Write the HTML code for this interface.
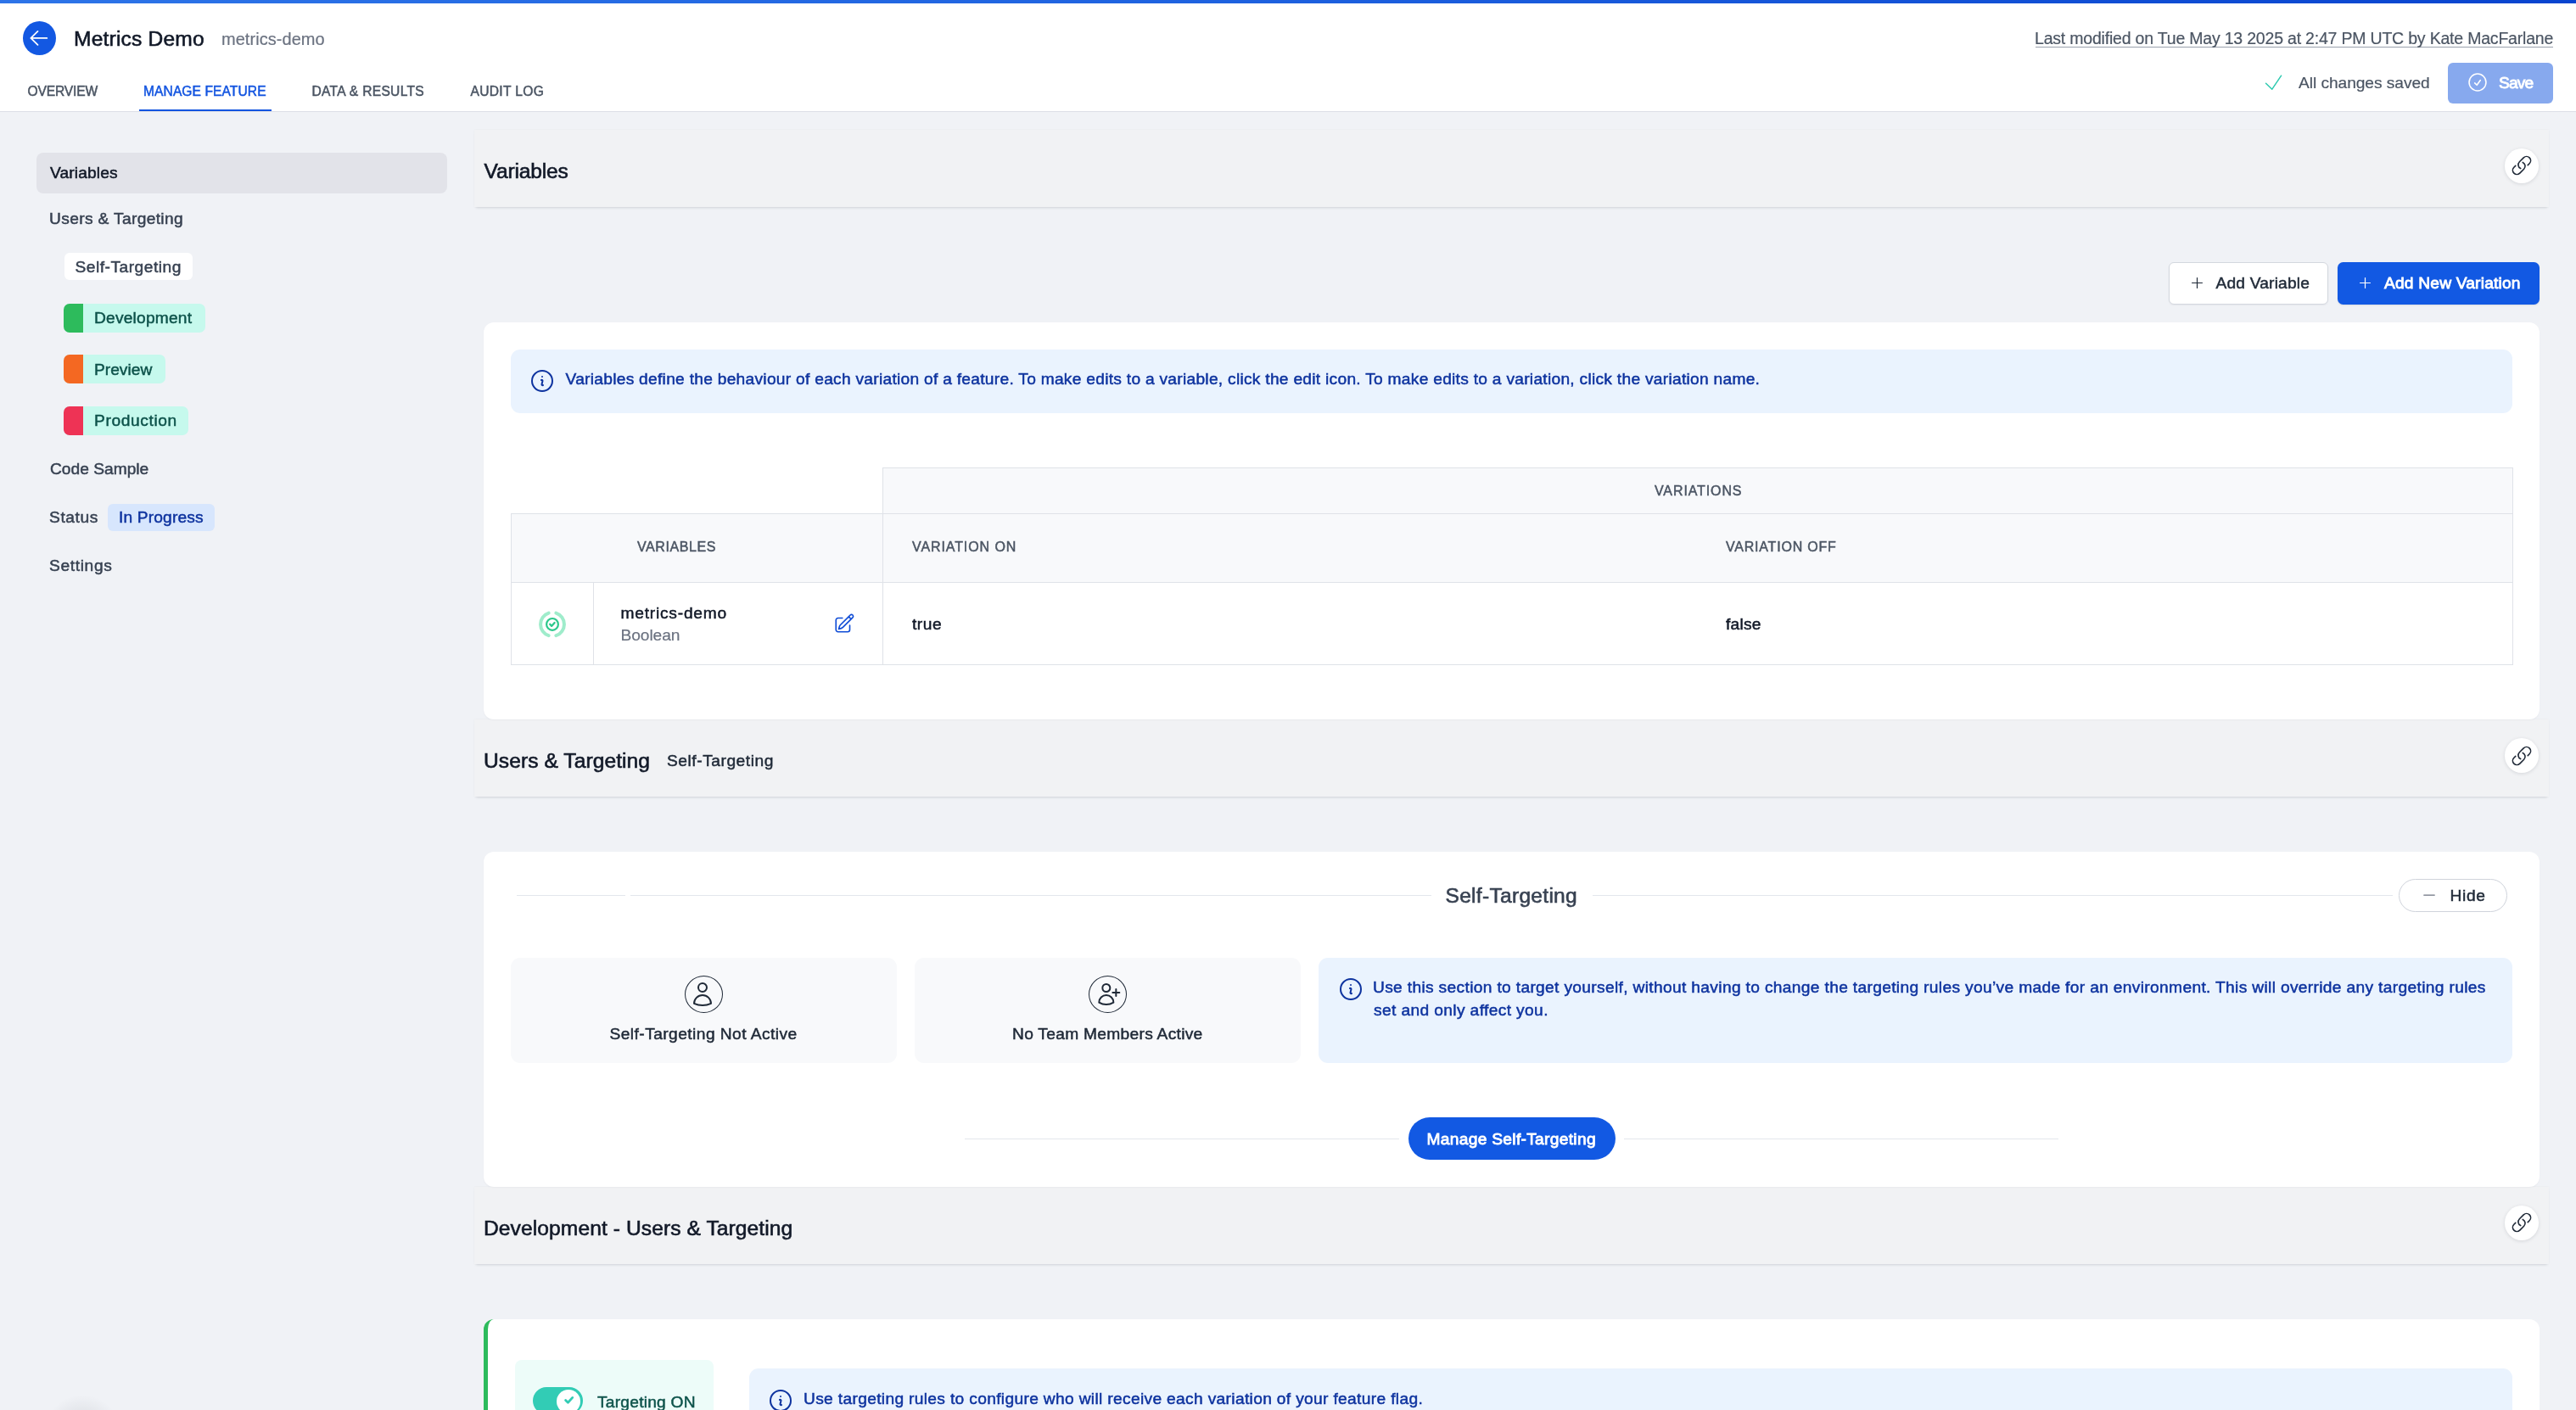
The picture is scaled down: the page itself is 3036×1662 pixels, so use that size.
<!DOCTYPE html>
<html lang="en"><head><meta charset="utf-8"><title>Metrics Demo - Manage Feature</title>
<style>
html,body{margin:0;padding:0;}
body{width:3036px;height:1662px;overflow:hidden;position:relative;background:#f0f2f6;font-family:'Liberation Sans',sans-serif;}
.a{position:absolute;box-sizing:border-box;}
.t{position:absolute;white-space:pre;font-family:'Liberation Sans',sans-serif;}
svg{position:absolute;overflow:visible;}
.panel{left:559px;width:2445px;height:91px;background:#f1f2f4;box-shadow:0 3px 3px -2px rgba(15,23,42,.13),0 0 2px rgba(15,23,42,.05);}
.card{left:570px;width:2423px;background:#fff;border-radius:12px;box-shadow:0 1px 2px rgba(15,23,42,.04);}
.info{background:#eaf3fe;border-radius:11px;}
.gbox{background:#f8f9fb;border-radius:11px;}
.linkc{width:40.8px;height:41px;border-radius:50%;background:#fff;box-shadow:0 1px 4px rgba(15,23,42,.12);left:2951.6px;}
.hl{height:1.33px;background:#e3e6ec;}
.pill{border-radius:7px;background:#c6f9ed;overflow:hidden;}
.pill i{position:absolute;left:0;top:0;bottom:0;width:23px;}
.tl{position:absolute;left:0;top:0;width:3036px;height:1662px;will-change:transform;}
@media (max-width:1600px){html{zoom:.5;}}

</style></head>
<body>
<!-- header -->
<div class="a" style="left:0;top:0;width:3036px;height:131.5px;background:#fff;border-bottom:1.33px solid #dcdfe6;"></div>
<div class="a" style="left:0;top:0;width:3036px;height:4px;background:linear-gradient(90deg,#2d74e8 0%,#1f63e0 45%,#0944cf 100%);"></div>
<div class="a" style="left:27px;top:25px;width:39px;height:40px;border-radius:50%;background:#1358e2;"></div>
<svg style="left:27px;top:25px" width="40" height="40" viewBox="0 0 40 40" fill="none" stroke="#fff" stroke-width="1.8" stroke-linecap="round" stroke-linejoin="round"><path d="M28.3 19.9H9.4M17.5 11.9l-8.1 8 8.1 8"/></svg>
<div class="a" style="left:164px;top:128.8px;width:156px;height:2.5px;background:#1355e0;"></div>
<div class="a" style="left:2399px;top:55px;width:610px;height:1.1px;background:#9aa1ad;"></div>
<!-- saved check -->
<svg style="left:2660px;top:80px" width="40" height="36" viewBox="0 0 40 36" fill="none" stroke="#2fcab0" stroke-width="1.5" stroke-linecap="round" stroke-linejoin="round"><path d="M10.5 18.2l7.3 7 10.8-16"/></svg>
<!-- save button -->
<div class="a" style="left:2885px;top:74px;width:124px;height:48px;border-radius:6px;background:#87a9ee;"></div>
<svg style="left:2904px;top:81.1px" width="32" height="32" viewBox="0 0 24 24" fill="none" stroke="#fff" stroke-width="1.4" stroke-linecap="round" stroke-linejoin="round"><path d="M9 12.75L11.25 15 15 9.75M21 12a9 9 0 11-18 0 9 9 0 0118 0z" transform="translate(12 12) scale(.83) translate(-12 -12)"/></svg>

<!-- sidebar -->
<div class="a" style="left:43px;top:180px;width:484px;height:47.5px;border-radius:8px;background:#e2e3e9;"></div>
<div class="a" style="left:76px;top:298px;width:151px;height:32px;border-radius:6px;background:#fff;"></div>
<div class="a pill" style="left:75px;top:358px;width:167px;height:33.5px;"><i style="background:#2dbb5c"></i></div>
<div class="a pill" style="left:75px;top:418px;width:120px;height:33.5px;"><i style="background:#f46822"></i></div>
<div class="a pill" style="left:75px;top:479px;width:147px;height:34px;"><i style="background:#ee3355"></i></div>
<div class="a" style="left:127px;top:594px;width:126px;height:31.5px;border-radius:6px;background:#d7e6fd;"></div>

<!-- section panels -->
<div class="a panel" style="top:152.5px;"></div>
<div class="a panel" style="top:848px;"></div>
<div class="a panel" style="top:1398.5px;"></div>

<!-- link circles -->
<div class="a linkc" style="top:174.7px;"></div>
<div class="a linkc" style="top:870.3px;"></div>
<div class="a linkc" style="top:1420.8px;"></div>
<svg style="left:2958.8px;top:181.9px" width="26" height="26" viewBox="0 0 24 24" fill="none" stroke="#1f2937" stroke-width="1.5" stroke-linecap="round" stroke-linejoin="round"><path d="M13.19 8.688a4.5 4.5 0 011.242 7.244l-4.5 4.5a4.5 4.5 0 01-6.364-6.364l1.757-1.757m13.35-.622l1.757-1.757a4.5 4.5 0 00-6.364-6.364l-4.5 4.5a4.5 4.5 0 001.242 7.244"/></svg>
<svg style="left:2958.8px;top:877.5px" width="26" height="26" viewBox="0 0 24 24" fill="none" stroke="#1f2937" stroke-width="1.5" stroke-linecap="round" stroke-linejoin="round"><path d="M13.19 8.688a4.5 4.5 0 011.242 7.244l-4.5 4.5a4.5 4.5 0 01-6.364-6.364l1.757-1.757m13.35-.622l1.757-1.757a4.5 4.5 0 00-6.364-6.364l-4.5 4.5a4.5 4.5 0 001.242 7.244"/></svg>
<svg style="left:2958.8px;top:1428px" width="26" height="26" viewBox="0 0 24 24" fill="none" stroke="#1f2937" stroke-width="1.5" stroke-linecap="round" stroke-linejoin="round"><path d="M13.19 8.688a4.5 4.5 0 011.242 7.244l-4.5 4.5a4.5 4.5 0 01-6.364-6.364l1.757-1.757m13.35-.622l1.757-1.757a4.5 4.5 0 00-6.364-6.364l-4.5 4.5a4.5 4.5 0 001.242 7.244"/></svg>

<!-- buttons -->
<div class="a" style="left:2556.2px;top:309.3px;width:187.5px;height:49.4px;border-radius:6px;background:#fff;border:1.33px solid #d3d7de;box-shadow:0 1px 2px rgba(15,23,42,.05);"></div>
<svg style="left:2580.2px;top:324px" width="19" height="19" viewBox="0 0 24 24" fill="none" stroke="#1f2937" stroke-width="1.5" stroke-linecap="round"><path d="M12 4.5v15m7.5-7.5h-15"/></svg>
<div class="a" style="left:2755px;top:309px;width:238px;height:50px;border-radius:6.5px;background:#1259e3;box-shadow:0 1px 2px rgba(15,23,42,.10);"></div>
<svg style="left:2777.9px;top:324px" width="19" height="19" viewBox="0 0 24 24" fill="none" stroke="#fff" stroke-width="1.5" stroke-linecap="round"><path d="M12 4.5v15m7.5-7.5h-15"/></svg>

<!-- card 1 -->
<div class="a card" style="top:380px;height:467.5px;"></div>
<div class="a info" style="left:602px;top:412px;width:2359px;height:75px;"></div>
<svg style="left:623px;top:432.7px" width="32" height="32" viewBox="0 0 24 24" fill="none" stroke="#0e339f" stroke-width="1.5" stroke-linecap="round" stroke-linejoin="round"><path d="M11.25 11.25l.041-.02a.75.75 0 011.063.852l-.708 2.836a.75.75 0 001.063.853l.041-.021M21 12a9 9 0 11-18 0 9 9 0 0118 0zm-9-3.75h.008v.008H12V8.25z"/></svg>
<!-- table -->
<div class="a" style="left:1040px;top:551px;width:1921.5px;height:55px;background:#f8f9fb;border:1.33px solid #dfe2e8;border-bottom:none;"></div>
<div class="a" style="left:602px;top:605px;width:2359.5px;height:82px;background:#f8f9fb;border:1.33px solid #dfe2e8;"></div>
<div class="a" style="left:602px;top:685.7px;width:2359.5px;height:98px;background:#fff;border:1.33px solid #dfe2e8;"></div>
<div class="a" style="left:1040px;top:605px;width:1.33px;height:178px;background:#dfe2e8;"></div>
<div class="a" style="left:699px;top:686px;width:1.33px;height:97px;background:#dfe2e8;"></div>
<!-- status icon -->
<svg style="left:631px;top:716px" width="40" height="40" viewBox="0 0 40 40" fill="none" stroke-linecap="round" stroke-linejoin="round">
<path d="M15.67 6.6A14 14 0 0 0 15.67 33.2M24.33 6.6A14 14 0 0 1 24.33 33.2" stroke="#9feccb" stroke-width="4"/>
<circle cx="20" cy="19.9" r="6.9" stroke="#2dc88c" stroke-width="2.2"/>
<path d="M17.2 19.8l1.9 2.1 3.5-3.9" stroke="#2dc88c" stroke-width="2.3"/>
</svg>
<!-- edit icon -->
<svg style="left:982.2px;top:721.7px" width="26" height="26" viewBox="0 0 24 24" fill="none" stroke="#0f4cd6" stroke-width="1.5" stroke-linecap="round" stroke-linejoin="round"><path d="M16.862 4.487l1.687-1.688a1.875 1.875 0 112.652 2.652L10.582 16.07a4.5 4.5 0 01-1.897 1.13L6 18l.8-2.685a4.5 4.5 0 011.13-1.897l8.932-8.931zm0 0L19.5 7.125M18 14v4.75A2.25 2.25 0 0115.75 21H5.25A2.25 2.25 0 013 18.75V8.25A2.25 2.25 0 015.25 6H10"/></svg>

<!-- card 2 -->
<div class="a card" style="top:1004px;height:394.5px;"></div>
<div class="a hl" style="left:609px;top:1054.5px;width:128px;"></div>
<div class="a hl" style="left:743px;top:1054.5px;width:943.5px;"></div>
<div class="a hl" style="left:1876.5px;top:1054.5px;width:943.5px;"></div>
<div class="a" style="left:2827px;top:1036px;width:128px;height:39px;border-radius:20px;background:#fff;border:1.33px solid #cfd3db;"></div>
<svg style="left:2853.25px;top:1045px" width="20" height="20" viewBox="0 0 24 24" fill="none" stroke="#6b7280" stroke-width="1.5" stroke-linecap="round"><path d="M19.5 12h-15"/></svg>
<div class="a gbox" style="left:602px;top:1129px;width:455px;height:124px;"></div>
<div class="a gbox" style="left:1078px;top:1129px;width:455px;height:124px;"></div>
<div class="a info" style="left:1554px;top:1129px;width:1407px;height:124px;"></div>
<!-- person icons -->
<div class="a" style="left:807px;top:1150px;width:45px;height:44px;border-radius:50%;border:1.4px solid #1f2937;"></div>
<svg style="left:812.4px;top:1155.5px" width="32" height="32" viewBox="0 0 24 24" fill="none" stroke="#1f2937" stroke-width="1.5" stroke-linecap="round" stroke-linejoin="round"><path d="M15.75 6a3.75 3.75 0 11-7.5 0 3.75 3.75 0 017.5 0zM4.501 20.118a7.5 7.5 0 0114.998 0A17.933 17.933 0 0112 21.75c-2.676 0-5.216-.584-7.499-1.632z"/></svg>
<div class="a" style="left:1283px;top:1150px;width:45px;height:44px;border-radius:50%;border:1.4px solid #1f2937;"></div>
<svg style="left:1289.5px;top:1156px" width="32" height="32" viewBox="0 0 24 24" fill="none" stroke="#1f2937" stroke-width="1.5" stroke-linecap="round" stroke-linejoin="round"><path d="M19 7.5v3m0 0v3m0-3h3m-3 0h-3m-2.25-4.125a3.375 3.375 0 11-6.75 0 3.375 3.375 0 016.75 0zM4 19.235v-.11a6.375 6.375 0 0112.75 0v.109A12.318 12.318 0 0110.374 21c-2.331 0-4.512-.645-6.374-1.766z"/></svg>
<svg style="left:1576px;top:1149.5px" width="32" height="32" viewBox="0 0 24 24" fill="none" stroke="#0e339f" stroke-width="1.5" stroke-linecap="round" stroke-linejoin="round"><path d="M11.25 11.25l.041-.02a.75.75 0 011.063.852l-.708 2.836a.75.75 0 001.063.853l.041-.021M21 12a9 9 0 11-18 0 9 9 0 0118 0zm-9-3.75h.008v.008H12V8.25z"/></svg>
<div class="a hl" style="left:1137px;top:1342px;width:512px;"></div>
<div class="a hl" style="left:1914px;top:1342px;width:512px;"></div>
<div class="a" style="left:1660px;top:1317px;width:243.5px;height:49.5px;border-radius:25px;background:#1259e3;"></div>

<!-- card 3 -->
<div class="a" style="left:570px;top:1555px;width:2423px;height:200px;background:#fff;border-radius:12px 12px 0 0;border-left:5.3px solid #2dbb5c;"></div>
<div class="a" style="left:607px;top:1603px;width:234px;height:80px;border-radius:8px;background:#edfcf9;"></div>
<div class="a" style="left:628px;top:1635px;width:59px;height:32px;border-radius:16px;background:#32ccb5;"></div>
<div class="a" style="left:656px;top:1637.5px;width:28px;height:28px;border-radius:50%;background:#fff;"></div>
<svg style="left:660px;top:1640px" width="21" height="21" viewBox="0 0 21 21" fill="none" stroke="#32ccb5" stroke-width="2.8" stroke-linecap="round" stroke-linejoin="round"><path d="M6.6 10.4l2.8 2.8 5.3-5.8"/></svg>
<div class="a info" style="left:883px;top:1613px;width:2078px;height:100px;"></div>
<svg style="left:904px;top:1635px" width="32" height="32" viewBox="0 0 24 24" fill="none" stroke="#0e339f" stroke-width="1.5" stroke-linecap="round" stroke-linejoin="round"><path d="M11.25 11.25l.041-.02a.75.75 0 011.063.852l-.708 2.836a.75.75 0 001.063.853l.041-.021M21 12a9 9 0 11-18 0 9 9 0 0118 0zm-9-3.75h.008v.008H12V8.25z"/></svg>
<!-- faint widget shadow bottom-left -->
<div class="a" style="left:52px;top:1644px;width:90px;height:90px;border-radius:50%;background:radial-gradient(closest-side,rgba(15,23,42,.11) 25%,rgba(15,23,42,.05) 60%,rgba(15,23,42,0) 100%);"></div>

<div class="tl">
<div class="t" style="left:87.00px;top:29.67px;font-size:24.6px;line-height:32px;letter-spacing:0.182px;color:#111827;font-weight:400;-webkit-text-stroke:0.6px currentColor;">Metrics Demo</div>
<div class="t" style="left:261.00px;top:32.77px;font-size:20px;line-height:26px;letter-spacing:0.045px;color:#6b7280;font-weight:400;-webkit-text-stroke:0.2px currentColor;">metrics-demo</div>
<div class="t" style="left:32.50px;top:97.79px;font-size:15.6px;line-height:20px;letter-spacing:-0.143px;color:#4b5563;font-weight:400;-webkit-text-stroke:0.5px currentColor;">OVERVIEW</div>
<div class="t" style="left:169.00px;top:97.79px;font-size:15.6px;line-height:20px;letter-spacing:0.077px;color:#1355e0;font-weight:400;-webkit-text-stroke:0.5px currentColor;">MANAGE FEATURE</div>
<div class="t" style="left:367.50px;top:97.79px;font-size:15.6px;line-height:20px;letter-spacing:0.308px;color:#4b5563;font-weight:400;-webkit-text-stroke:0.5px currentColor;">DATA &amp; RESULTS</div>
<div class="t" style="left:554.50px;top:97.79px;font-size:15.6px;line-height:20px;letter-spacing:0.312px;color:#4b5563;font-weight:400;-webkit-text-stroke:0.5px currentColor;">AUDIT LOG</div>
<div class="t" style="left:2398.00px;top:32.94px;font-size:19.5px;line-height:25px;letter-spacing:-0.200px;color:#4b5563;font-weight:400;-webkit-text-stroke:0.2px currentColor;">Last modified on Tue May 13 2025 at 2:47 PM UTC by Kate MacFarlane</div>
<div class="t" style="left:2709.00px;top:84.79px;font-size:19.2px;line-height:25px;letter-spacing:-0.062px;color:#4b5563;font-weight:400;-webkit-text-stroke:0.2px currentColor;">All changes saved</div>
<div class="t" style="left:2945.00px;top:84.79px;font-size:19.2px;line-height:25px;letter-spacing:-0.833px;color:#ffffff;font-weight:400;-webkit-text-stroke:0.85px currentColor;">Save</div>
<div class="t" style="left:59.00px;top:191.04px;font-size:19.2px;line-height:25px;letter-spacing:0.125px;color:#111827;font-weight:400;-webkit-text-stroke:0.5px currentColor;">Variables</div>
<div class="t" style="left:58.00px;top:245.04px;font-size:19.2px;line-height:25px;letter-spacing:0.344px;color:#374151;font-weight:400;-webkit-text-stroke:0.5px currentColor;">Users &amp; Targeting</div>
<div class="t" style="left:88.50px;top:302.04px;font-size:19.2px;line-height:25px;letter-spacing:0.500px;color:#374151;font-weight:400;-webkit-text-stroke:0.5px currentColor;">Self-Targeting</div>
<div class="t" style="left:111.00px;top:362.04px;font-size:19.2px;line-height:25px;letter-spacing:0.200px;color:#0e534b;font-weight:400;-webkit-text-stroke:0.5px currentColor;">Development</div>
<div class="t" style="left:111.00px;top:422.54px;font-size:19.2px;line-height:25px;letter-spacing:0.000px;color:#0e534b;font-weight:400;-webkit-text-stroke:0.5px currentColor;">Preview</div>
<div class="t" style="left:111.00px;top:483.04px;font-size:19.2px;line-height:25px;letter-spacing:0.611px;color:#0e534b;font-weight:400;-webkit-text-stroke:0.5px currentColor;">Production</div>
<div class="t" style="left:59.00px;top:540.04px;font-size:19.2px;line-height:25px;letter-spacing:0.000px;color:#374151;font-weight:400;-webkit-text-stroke:0.5px currentColor;">Code Sample</div>
<div class="t" style="left:58.00px;top:597.04px;font-size:19.2px;line-height:25px;letter-spacing:0.600px;color:#374151;font-weight:400;-webkit-text-stroke:0.5px currentColor;">Status</div>
<div class="t" style="left:140.00px;top:597.04px;font-size:19.2px;line-height:25px;letter-spacing:0.150px;color:#0e339f;font-weight:400;-webkit-text-stroke:0.5px currentColor;">In Progress</div>
<div class="t" style="left:58.00px;top:654.04px;font-size:19.2px;line-height:25px;letter-spacing:0.643px;color:#374151;font-weight:400;-webkit-text-stroke:0.5px currentColor;">Settings</div>
<div class="t" style="left:570.50px;top:185.87px;font-size:24.6px;line-height:32px;letter-spacing:-0.162px;color:#111827;font-weight:400;-webkit-text-stroke:0.6px currentColor;">Variables</div>
<div class="t" style="left:2611.50px;top:321.04px;font-size:19.2px;line-height:25px;letter-spacing:0.182px;color:#1f2937;font-weight:400;-webkit-text-stroke:0.5px currentColor;">Add Variable</div>
<div class="t" style="left:2810.00px;top:321.04px;font-size:19.2px;line-height:25px;letter-spacing:0.188px;color:#ffffff;font-weight:400;-webkit-text-stroke:0.85px currentColor;">Add New Variation</div>
<div class="t" style="left:666.50px;top:434.04px;font-size:19.2px;line-height:25px;letter-spacing:0.272px;color:#0e339f;font-weight:400;-webkit-text-stroke:0.5px currentColor;">Variables define the behaviour of each variation of a feature. To make edits to a variable, click the edit icon. To make edits to a variation, click the variation name.</div>
<div class="t" style="left:1950.00px;top:568.05px;font-size:16px;line-height:21px;letter-spacing:0.889px;color:#4b5563;font-weight:400;-webkit-text-stroke:0.5px currentColor;">VARIATIONS</div>
<div class="t" style="left:751.00px;top:634.15px;font-size:16px;line-height:21px;letter-spacing:0.594px;color:#4b5563;font-weight:400;-webkit-text-stroke:0.5px currentColor;">VARIABLES</div>
<div class="t" style="left:1075.00px;top:634.15px;font-size:16px;line-height:21px;letter-spacing:0.909px;color:#4b5563;font-weight:400;-webkit-text-stroke:0.5px currentColor;">VARIATION ON</div>
<div class="t" style="left:2034.00px;top:634.15px;font-size:16px;line-height:21px;letter-spacing:0.792px;color:#4b5563;font-weight:400;-webkit-text-stroke:0.5px currentColor;">VARIATION OFF</div>
<div class="t" style="left:731.50px;top:710.04px;font-size:19.2px;line-height:25px;letter-spacing:0.773px;color:#111827;font-weight:400;-webkit-text-stroke:0.5px currentColor;">metrics-demo</div>
<div class="t" style="left:731.50px;top:736.04px;font-size:19.2px;line-height:25px;letter-spacing:-0.083px;color:#6b7280;font-weight:400;-webkit-text-stroke:0.2px currentColor;">Boolean</div>
<div class="t" style="left:1075.00px;top:722.54px;font-size:19.2px;line-height:25px;letter-spacing:0.500px;color:#111827;font-weight:400;-webkit-text-stroke:0.5px currentColor;">true</div>
<div class="t" style="left:2034.00px;top:722.54px;font-size:19.2px;line-height:25px;letter-spacing:0.250px;color:#111827;font-weight:400;-webkit-text-stroke:0.5px currentColor;">false</div>
<div class="t" style="left:570.00px;top:881.17px;font-size:24.6px;line-height:32px;letter-spacing:0.062px;color:#111827;font-weight:400;-webkit-text-stroke:0.6px currentColor;">Users &amp; Targeting</div>
<div class="t" style="left:786.00px;top:884.24px;font-size:19.2px;line-height:25px;letter-spacing:0.538px;color:#1f2937;font-weight:400;-webkit-text-stroke:0.5px currentColor;">Self-Targeting</div>
<div class="t" style="left:1703.50px;top:1039.67px;font-size:24.6px;line-height:32px;letter-spacing:0.269px;color:#374151;font-weight:400;-webkit-text-stroke:0.6px currentColor;">Self-Targeting</div>
<div class="t" style="left:2887.50px;top:1043.04px;font-size:19.2px;line-height:25px;letter-spacing:0.667px;color:#1f2937;font-weight:400;-webkit-text-stroke:0.5px currentColor;">Hide</div>
<div class="t" style="left:718.50px;top:1206.04px;font-size:19.2px;line-height:25px;letter-spacing:0.438px;color:#1f2937;font-weight:400;-webkit-text-stroke:0.5px currentColor;">Self-Targeting Not Active</div>
<div class="t" style="left:1193.00px;top:1206.04px;font-size:19.2px;line-height:25px;letter-spacing:0.286px;color:#1f2937;font-weight:400;-webkit-text-stroke:0.5px currentColor;">No Team Members Active</div>
<div class="t" style="left:1618.00px;top:1151.04px;font-size:19.2px;line-height:25px;letter-spacing:0.331px;color:#0e339f;font-weight:400;-webkit-text-stroke:0.5px currentColor;">Use this section to target yourself, without having to change the targeting rules you’ve made for an environment. This will override any targeting rules</div>
<div class="t" style="left:1619.00px;top:1178.04px;font-size:19.2px;line-height:25px;letter-spacing:0.370px;color:#0e339f;font-weight:400;-webkit-text-stroke:0.5px currentColor;">set and only affect you.</div>
<div class="t" style="left:1681.50px;top:1329.54px;font-size:19.2px;line-height:25px;letter-spacing:0.300px;color:#ffffff;font-weight:400;-webkit-text-stroke:0.85px currentColor;">Manage Self-Targeting</div>
<div class="t" style="left:570.00px;top:1431.67px;font-size:24.6px;line-height:32px;letter-spacing:0.083px;color:#111827;font-weight:400;-webkit-text-stroke:0.6px currentColor;">Development - Users &amp; Targeting</div>
<div class="t" style="left:704.00px;top:1640.04px;font-size:19.2px;line-height:25px;letter-spacing:0.227px;color:#0e534b;font-weight:400;-webkit-text-stroke:0.5px currentColor;">Targeting ON</div>
<div class="t" style="left:947.00px;top:1635.54px;font-size:19.2px;line-height:25px;letter-spacing:0.329px;color:#0e339f;font-weight:400;-webkit-text-stroke:0.5px currentColor;">Use targeting rules to configure who will receive each variation of your feature flag.</div>
</div>
</body></html>
